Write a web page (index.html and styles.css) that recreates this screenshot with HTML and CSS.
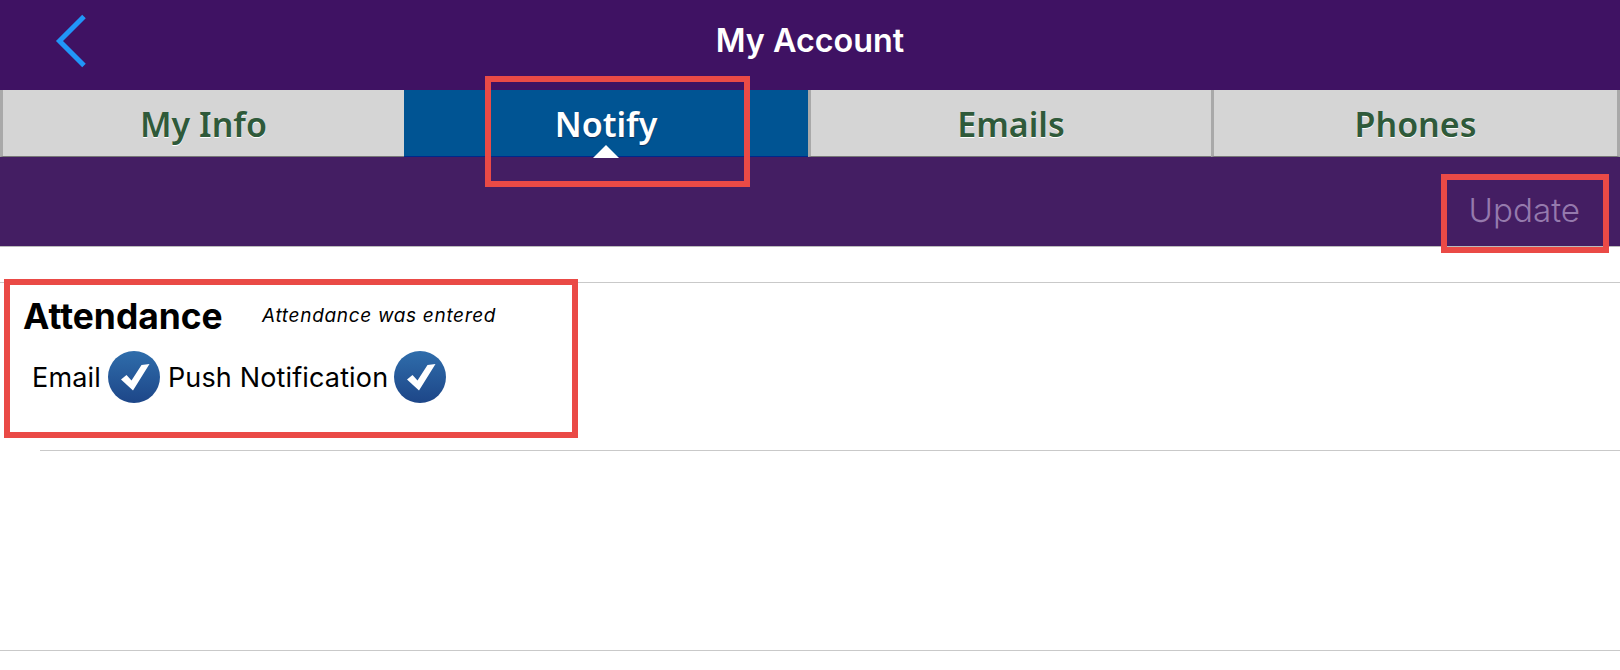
FILE: index.html
```html
<!DOCTYPE html>
<html lang="en">
<head>
<meta charset="utf-8">
<title>My Account</title>
<link rel="stylesheet" href="styles.css">
</head>
<body>
<header class="topbar">
  <svg class="back" width="32" height="54" viewBox="0 0 32 54"><path d="M29 2.5 L4.5 27 L29 51.5" fill="none" stroke="#2196f8" stroke-width="5"/></svg>
  <h1 class="title">My Account</h1>
</header>
<nav class="tabs">
  <div class="tab">My Info</div>
  <div class="tab tab-active">Notify<span class="caret"></span></div>
  <div class="tab">Emails</div>
  <div class="tab tab-last">Phones</div>
</nav>
<div class="subbar"><span class="update">Update</span></div>
<main class="content">
  <section class="row">
    <div class="row-head">
      <h2 class="row-title">Attendance</h2>
      <span class="row-note">Attendance was entered</span>
    </div>
    <div class="options">
      <span class="opt-label">Email</span>
      <span class="check"><svg width="52" height="52" viewBox="0 0 52 52"><polygon points="13,28.5 18.5,24 23.5,29.5 33.5,14 41.5,13 25,39.5" fill="#fff"/></svg></span>
      <span class="opt-label">Push Notification</span>
      <span class="check"><svg width="52" height="52" viewBox="0 0 52 52"><polygon points="13,28.5 18.5,24 23.5,29.5 33.5,14 41.5,13 25,39.5" fill="#fff"/></svg></span>
    </div>
  </section>
  <div class="empty-row"></div>
</main>
<div class="mark mark-notify"></div>
<div class="mark mark-update"></div>
<div class="mark mark-row"></div>
</body>
</html>
```

FILE: styles.css
```css
* { box-sizing: border-box; }
html, body { margin: 0; padding: 0; }
body {
  width: 1620px;
  height: 670px;
  overflow: hidden;
  background: #fff;
  font-family: Inter, "Liberation Sans", sans-serif;
  position: relative;
}
.topbar {
  height: 90px;
  background: #3f1263;
  display: flex;
  align-items: center;
  justify-content: center;
  position: relative;
}
.back { position: absolute; left: 55px; top: 14px; }
.title {
  margin: 0 0 10px;
  color: #fff;
  font-size: 32.3px;
  font-weight: 600;
}
.tabs {
  height: 67px;
  display: grid;
  grid-template-columns: 404px 404px 403px 409px;
}
.tab {
  position: relative;
  display: flex;
  align-items: center;
  justify-content: center;
  padding-top: 2px;
  background: #d5d5d5;
  border-left: 3px solid #a9a9a9;
  border-bottom: 1px solid #777;
  color: #2f5a3a;
  font-family: "Noto Sans", sans-serif;
  font-size: 34px;
  font-weight: 600;
  text-shadow: 0 1px 0 #fff;
}
.tab-active {
  background: #005493;
  border-left: 0;
  border-bottom: 1px solid #00288c;
  color: #fff;
  text-shadow: 0 1px 1px #12305a;
}
.tab-last { border-right: 3px solid #a9a9a9; }
.caret {
  position: absolute;
  left: 50%;
  bottom: -2px;
  margin-left: -13px;
  border-left: 13px solid transparent;
  border-right: 13px solid transparent;
  border-bottom: 13px solid #fff;
}
.subbar {
  height: 90px;
  background: #441e63;
  border-bottom: 1px solid #bbb;
  display: flex;
  align-items: center;
  justify-content: flex-end;
  padding: 17px 40px 0 0;
}
.update {
  color: #957aad;
  font-size: 33.2px;
  font-weight: 300;
}
.content { padding-top: 35px; }
.row {
  height: 168px;
  border-top: 1px solid #c9c9c9;
  padding: 12px 0 0 23px;
}
.row-head { display: flex; align-items: center; }
.row-title {
  margin: 0;
  width: 239px;
  color: #000;
  font-size: 35.4px;
  font-weight: 700;
}
.row-note {
  margin-bottom: 2px;
  color: #000;
  font-size: 19px;
  font-style: italic;
  letter-spacing: 0.68px;
}
.options {
  display: flex;
  align-items: center;
  margin-top: 13px;
  padding-left: 9px;
}
.opt-label { color: #000; font-size: 27px; letter-spacing: 0.15px; }
.opt-label + .check + .opt-label { margin-left: 1px; }
.check {
  width: 52px;
  height: 52px;
  margin: 0 7px;
  border-radius: 50%;
  background: linear-gradient(#2f6dab, #1d4688);
  display: block;
}
.check:last-child { margin-left: 6px; }
.check svg { display: block; }
.empty-row {
  height: 201px;
  margin-left: 40px;
  border-top: 1px solid #c9c9c9;
  position: relative;
}
.empty-row::after {
  content: "";
  position: absolute;
  left: -40px;
  right: 0;
  bottom: 0;
  border-bottom: 1px solid #c9c9c9;
}
.mark {
  position: absolute;
  border: 6px solid #ea4a46;
}
.mark-notify { left: 485px; top: 76px; width: 265px; height: 111px; }
.mark-update { left: 1441px; top: 174px; width: 168px; height: 79px; }
.mark-row { left: 4px; top: 279px; width: 574px; height: 159px; }
```
